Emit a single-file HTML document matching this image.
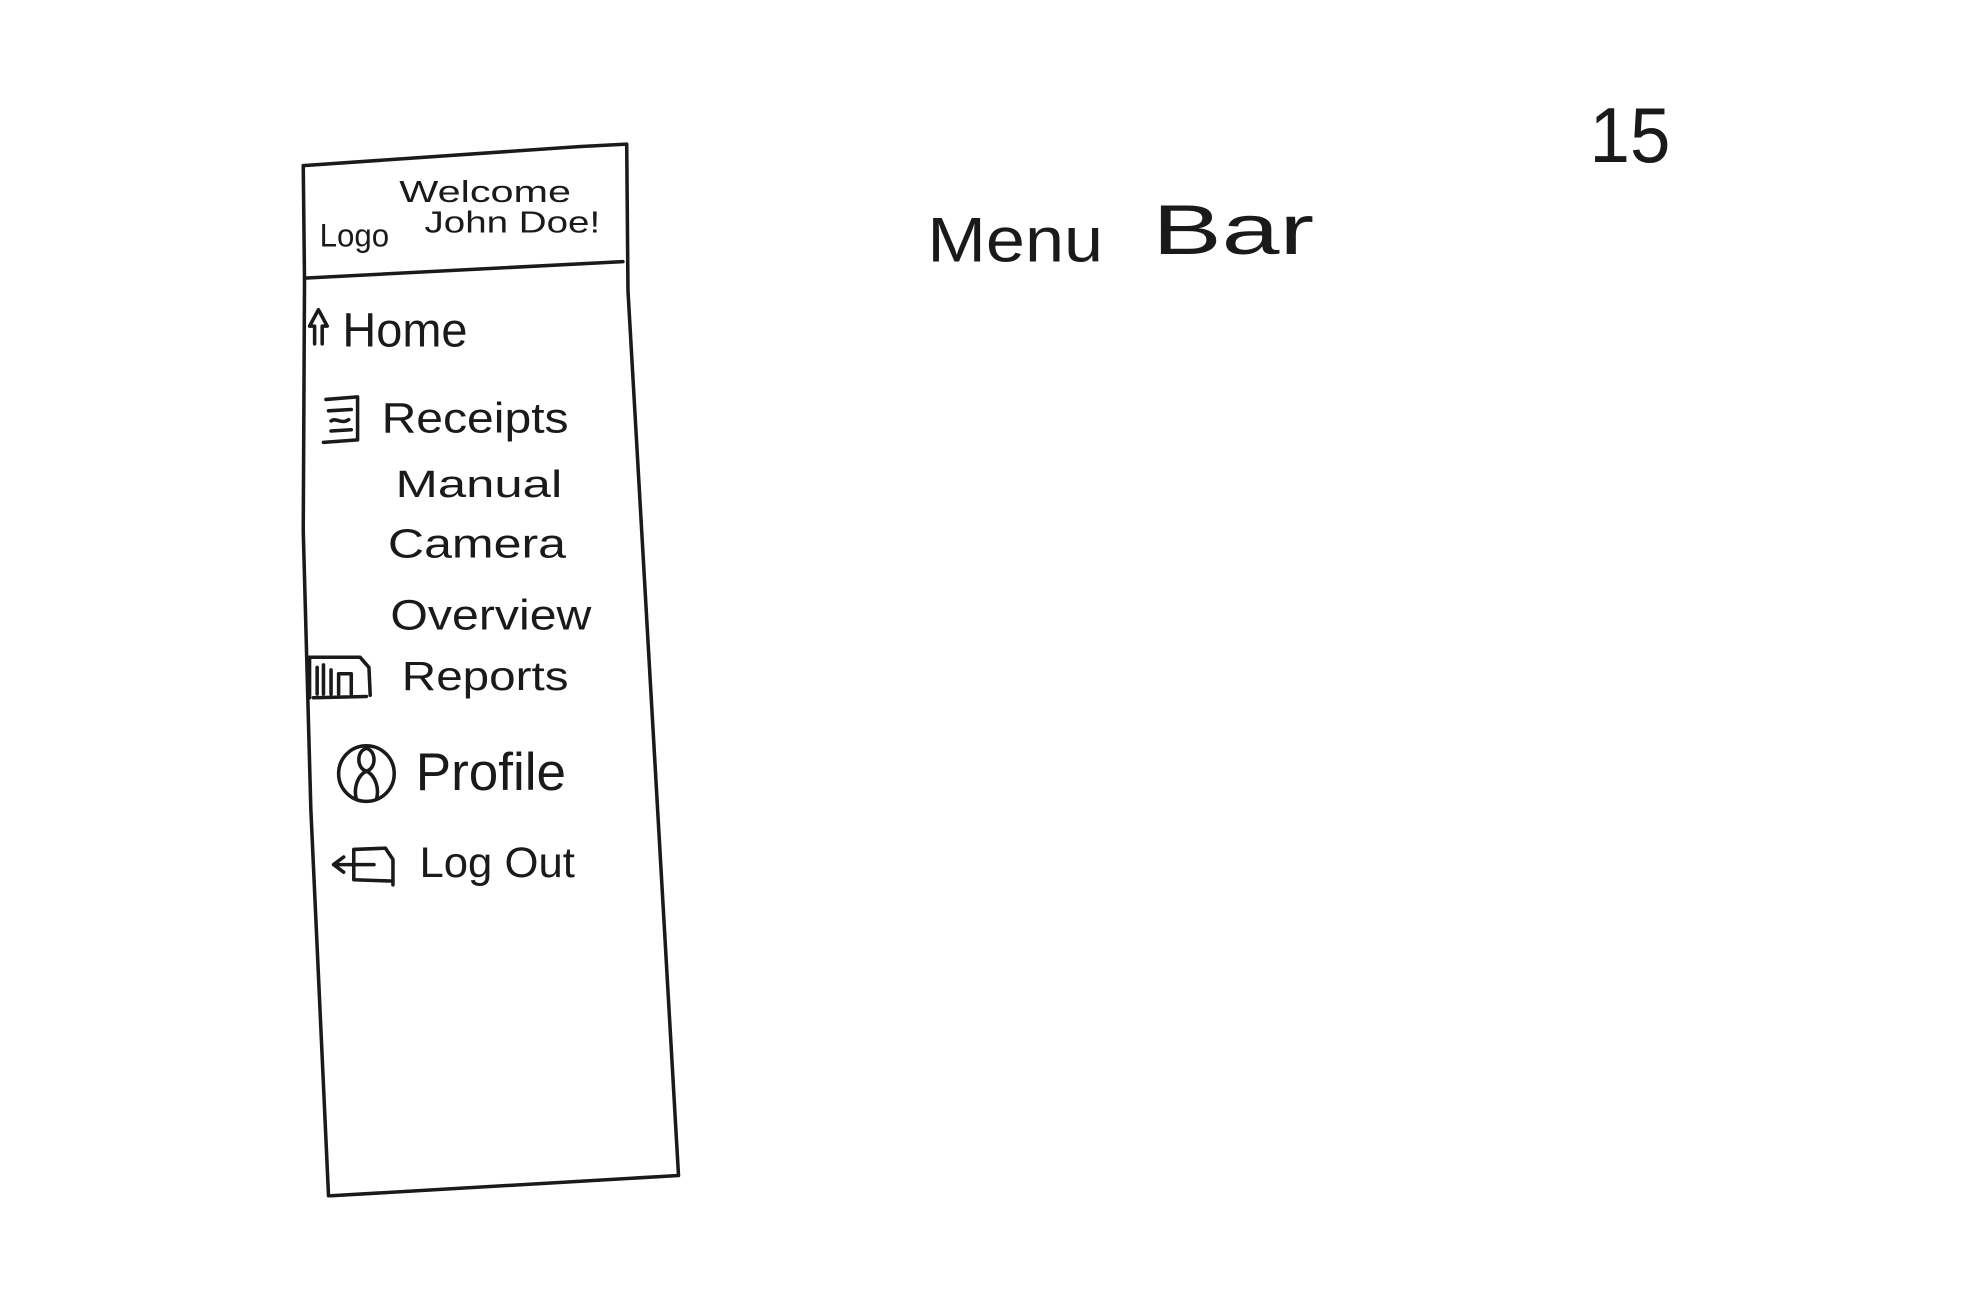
<!DOCTYPE html>
<html><head><meta charset="utf-8"><style>
html,body{margin:0;padding:0;background:#fff;width:1961px;height:1307px;overflow:hidden}
svg{display:block}
text{font-family:"Liberation Sans",sans-serif;fill:#1a1a1a}
</style></head><body>
<svg width="1961" height="1307" viewBox="0 0 1552 1034" preserveAspectRatio="none" xmlns="http://www.w3.org/2000/svg">
<g fill="none" stroke="#1a1a1a" stroke-width="2.8" stroke-linecap="round" stroke-linejoin="round">
<path d="M240 131 L458 116 L496 114 L497 230 L537 930 L262 946"/>
<path d="M240 131 L241 222 L240 420 L246 640 L260 946"/>
<path d="M241 220 L493 207"/>
<path d="M249 272 L249 258 L245 258 L252 245 L259 258 L255 258 L255 272"/>
<path d="M258 316 L283 314 L283 348 L256 350 M260 325 L278 324 M262 333 C266 330 270 336 276 332 M262 341 L278 340"/>
<path d="M245 552 L245 520 L285 520 L292 528 L293 550 M248 552 L290 551 M251 549 L251 528 M256 549 L256 526 M262 549 L262 530 M268 549 L268 533 L278 533 L278 549"/>
<circle cx="290" cy="612" r="22"/>
<path d="M290 592 C282 594 282 608 290 610 C298 608 298 594 290 592 M290 610 C282 614 280 625 282 632 M290 610 C298 614 300 625 298 632"/>
<path d="M264 684 L296 684 M264 684 L272 678 M264 684 L272 690 M280 672 L305 671 L311 680 L311 700 M280 672 L280 696 L309 697"/>
</g>
<text x="316" y="160" font-size="24" textLength="136" lengthAdjust="spacingAndGlyphs">Welcome</text>
<text x="336" y="184" font-size="24" textLength="139" lengthAdjust="spacingAndGlyphs">John Doe!</text>
<text x="253" y="195" font-size="26" textLength="55" lengthAdjust="spacingAndGlyphs">Logo</text>
<text x="271" y="274" font-size="38" textLength="99" lengthAdjust="spacingAndGlyphs">Home</text>
<text x="302" y="342" font-size="34" textLength="148" lengthAdjust="spacingAndGlyphs">Receipts</text>
<text x="313" y="393" font-size="30" textLength="132" lengthAdjust="spacingAndGlyphs">Manual</text>
<text x="307" y="441" font-size="32" textLength="141" lengthAdjust="spacingAndGlyphs">Camera</text>
<text x="309" y="498" font-size="34" textLength="159" lengthAdjust="spacingAndGlyphs">Overview</text>
<text x="318" y="546" font-size="32" textLength="132" lengthAdjust="spacingAndGlyphs">Reports</text>
<text x="329" y="625" font-size="42" textLength="119" lengthAdjust="spacingAndGlyphs">Profile</text>
<text x="332" y="694" font-size="34" textLength="123" lengthAdjust="spacingAndGlyphs">Log Out</text>
<text x="734" y="207" font-size="50" textLength="139" lengthAdjust="spacingAndGlyphs">Menu</text>
<text x="912" y="201" font-size="56" textLength="128" lengthAdjust="spacingAndGlyphs">Bar</text>
<text x="1258" y="128" font-size="62" textLength="64" lengthAdjust="spacingAndGlyphs">15</text>
</svg>
</body></html>
